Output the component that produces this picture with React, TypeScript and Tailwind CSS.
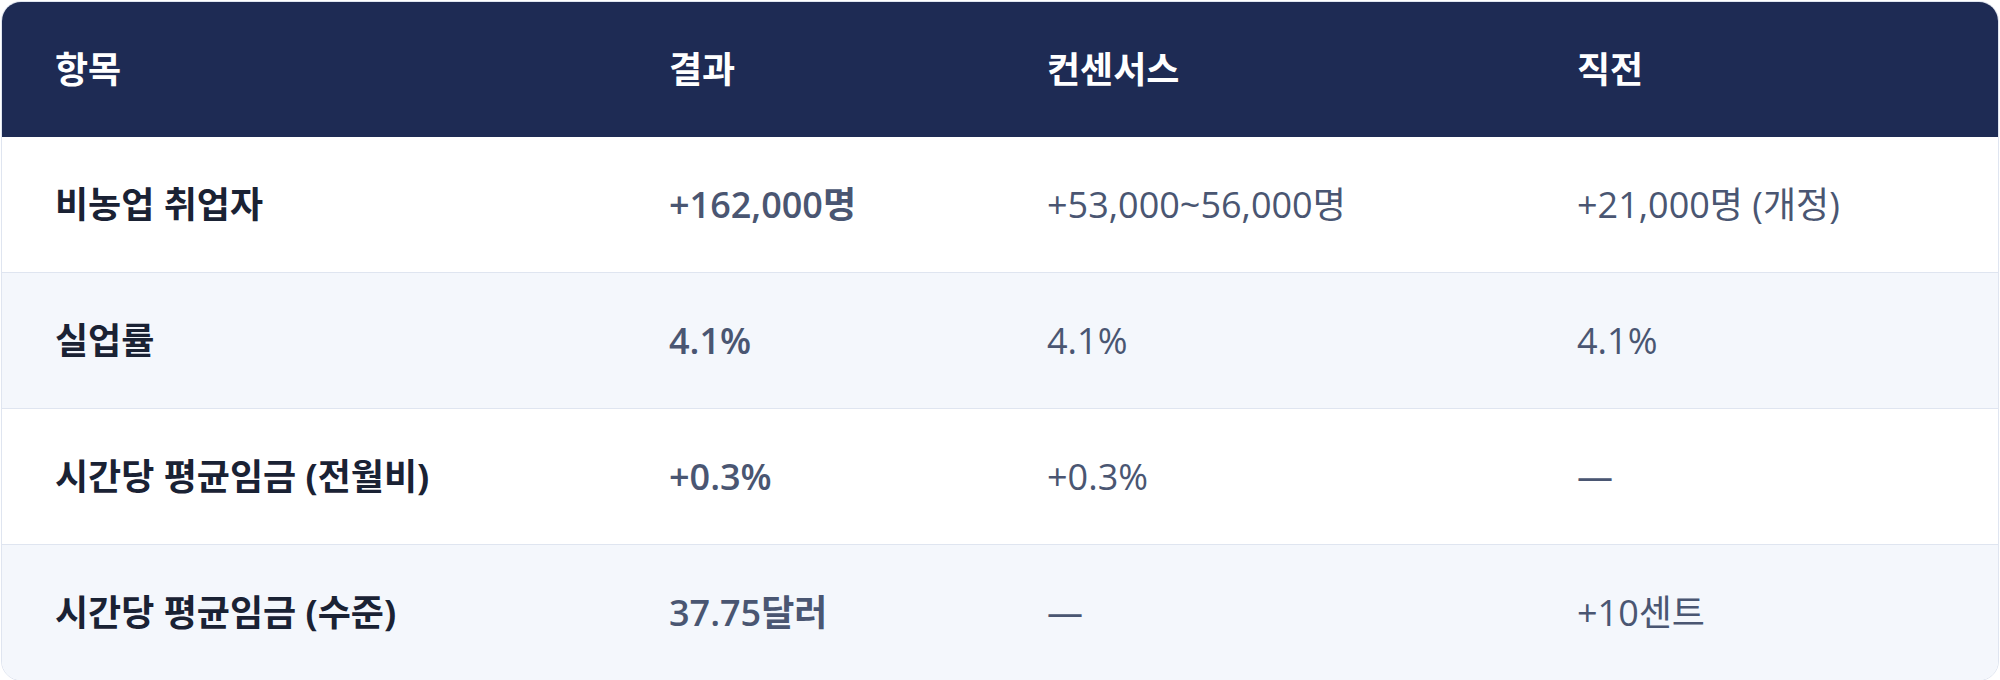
import React from "react";

const rows = [
  { item: "비농업 취업자", result: "+162,000명", cons: "+53,000~56,000명", prev: "+21,000명 (개정)" },
  { item: "실업률", result: "4.1%", cons: "4.1%", prev: "4.1%" },
  { item: "시간당 평균임금 (전월비)", result: "+0.3%", cons: "+0.3%", prev: "—" },
  { item: "시간당 평균임금 (수준)", result: "37.75달러", cons: "—", prev: "+10센트" },
];

export default function App() {
  return (
    <div className="w-[2000px] h-[680px] bg-white pl-[1px] pt-[1px] font-['Open_Sans','Noto_Sans_CJK_KR',sans-serif]">
      <div className="w-[1998px] rounded-[20px] border border-[#dfe5f0] overflow-hidden">
        <div className="grid grid-cols-[614px_378px_530px_1fr] h-[135px] items-center bg-[#1e2b54] text-white font-bold text-[36px] pl-[53px]">
          <div>항목</div>
          <div>결과</div>
          <div>컨센서스</div>
          <div>직전</div>
        </div>
        {rows.map((r, i) => (
          <div
            key={i}
            className={
              "grid grid-cols-[614px_378px_530px_1fr] h-[135px] items-center text-[36px] pl-[53px] " +
              (i > 0 ? "border-t border-[#dfe5f0] h-[136px] " : "") +
              (i % 2 === 1 ? "bg-[#f4f7fc]" : "bg-white")
            }
          >
            <div className="font-bold text-[#1a2234]">{r.item}</div>
            <div className="font-semibold text-[#4a5672]">{r.result}</div>
            <div className="text-[#4a5672]">{r.cons}</div>
            <div className="text-[#4a5672]">{r.prev}</div>
          </div>
        ))}
      </div>
    </div>
  );
}
